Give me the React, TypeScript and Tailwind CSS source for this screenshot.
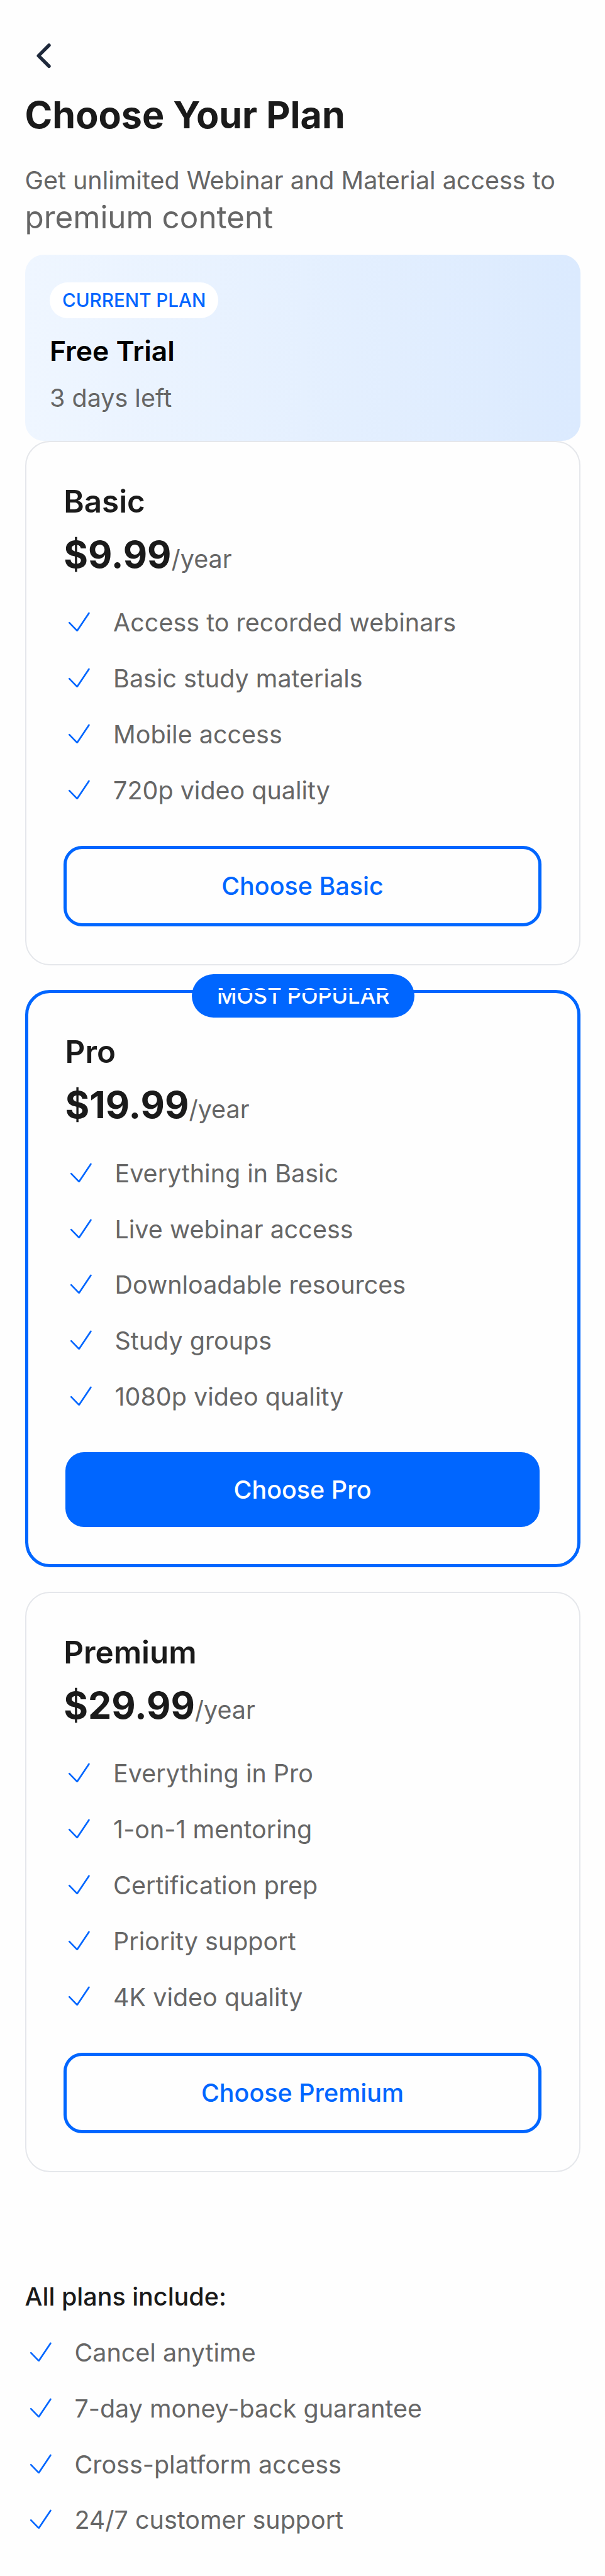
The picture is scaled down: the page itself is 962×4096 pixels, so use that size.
import { IoChevronBack } from 'react-icons/io5';

interface Plan {
  name: string;
  price: string;
  features: string[];
  popular?: boolean;
}

const plans: Plan[] = [
  {
    name: 'Basic',
    price: '$9.99',
    features: ['Access to recorded webinars', 'Basic study materials', 'Mobile access', '720p video quality'],
  },
  {
    name: 'Pro',
    price: '$19.99',
    features: [
      'Everything in Basic',
      'Live webinar access',
      'Downloadable resources',
      'Study groups',
      '1080p video quality',
    ],
    popular: true,
  },
  {
    name: 'Premium',
    price: '$29.99',
    features: ['Everything in Pro', '1-on-1 mentoring', 'Certification prep', 'Priority support', '4K video quality'],
  },
];

const included = ['Cancel anytime', '7-day money-back guarantee', 'Cross-platform access', '24/7 customer support'];

function FeatureList({ items }: { items: string[] }) {
  return (
    <ul className="flex flex-col gap-[29.6px]">
      {items.map((item) => (
        <li key={item} className="flex h-[59.2px] items-center">
          <svg
            className="mr-[29.6px] h-[49.3px] w-[49.3px] shrink-0"
            viewBox="0 0 49.3 49.3"
            fill="none"
            stroke="#0066ff"
            strokeWidth="2.7"
            strokeLinecap="round"
            strokeLinejoin="bevel"
          >
            <path d="M9.2 25.1 L21.6 37.9 L40.4 9.9" />
          </svg>
          <span className="pt-[2px] text-[39.47px] leading-[59.2px] whitespace-nowrap text-[#666666]">{item}</span>
        </li>
      ))}
    </ul>
  );
}

function PlanCard({ plan }: { plan: Plan }) {
  return (
    <div
      className={
        plan.popular
          ? 'relative rounded-[39.5px] p-[64.1px]'
          : 'rounded-[39.5px] border-2 border-[#e5e7eb] p-[59.7px]'
      }
    >
      {plan.popular && (
        <>
          <div className="absolute -top-[24.6px] left-[265.4px] flex h-[69px] w-[354.6px] items-center justify-center rounded-full bg-[#0066ff] text-[34.5px] leading-[42px] font-medium whitespace-nowrap text-white">
            MOST POPULAR
          </div>
          {/* The outline runs over the badge */}
          <div className="absolute inset-0 rounded-[39.5px] border-[5px] border-[#0066ff]" />
        </>
      )}
      <h2 className="text-[49.33px] leading-[69px] font-semibold text-[#1a1a1a]">{plan.name}</h2>
      <div className="mt-[20px] flex h-[59.2px] items-baseline leading-[59.2px]">
        <span className="text-[59.2px] font-bold text-[#1a1a1a]">{plan.price}</span>
        <span className="text-[39.47px] text-[#666666]">/year</span>
      </div>
      <div className="mt-[49.6px]">
        <FeatureList items={plan.features} />
      </div>
      {plan.popular ? (
        <button className="relative mt-[58.9px] block h-[118.4px] w-full rounded-[29.6px] bg-[#0066ff] pt-[2px] text-[39.47px] font-medium text-white">
          Choose {plan.name}
        </button>
      ) : (
        <button className="mt-[58.9px] block h-[128.3px] w-full rounded-[29.6px] border-[5px] border-[#0066ff] pt-[2px] text-[39.47px] font-medium text-[#0066ff]">
          Choose {plan.name}
        </button>
      )}
    </div>
  );
}

export default function App() {
  return (
    <div className="h-[4096px] w-[962px] overflow-hidden bg-[#fefefe] px-[39.5px] pt-[59.2px] font-['Inter',sans-serif]">
      <IoChevronBack className="block h-[59.2px] w-[59.2px] text-[#1e293b]" />
      <h1 className="mt-[29px] text-[59.2px] leading-[72px] font-bold text-[#1a1a1a]">Choose Your Plan</h1>
      <p className="mt-[38.6px] text-[39.47px] leading-[59.2px] whitespace-nowrap text-[#666666]">
        Get unlimited Webinar and Material access to
        <span className="-mt-px block text-[49.33px]">premium content</span>
      </p>

      <div className="mt-[29.5px] h-[296px] rounded-[29.6px] bg-linear-to-r from-[#eff6ff] to-[#dbeafe] px-[39.5px] pt-[44.3px]">
        <div className="flex h-[57.2px] w-[268.4px] items-center justify-center rounded-full bg-white pb-px text-[29.6px] font-medium text-[#0066ff]">
          CURRENT PLAN
        </div>
        <h2 className="mt-[22px] text-[44.4px] leading-[60px] font-semibold text-black">Free Trial</h2>
        <p className="mt-[15.5px] text-[39.47px] leading-[59.2px] text-[#666666]">3 days left</p>
      </div>

      <div className="flex flex-col gap-[39.3px]">
        {plans.map((plan) => (
          <PlanCard key={plan.name} plan={plan} />
        ))}
      </div>

      <div className="mt-[169.7px]">
        <h3 className="mb-[28.6px] text-[39.47px] leading-[59.2px] font-medium text-[#1a1a1a]">All plans include:</h3>
        <FeatureList items={included} />
      </div>
    </div>
  );
}
